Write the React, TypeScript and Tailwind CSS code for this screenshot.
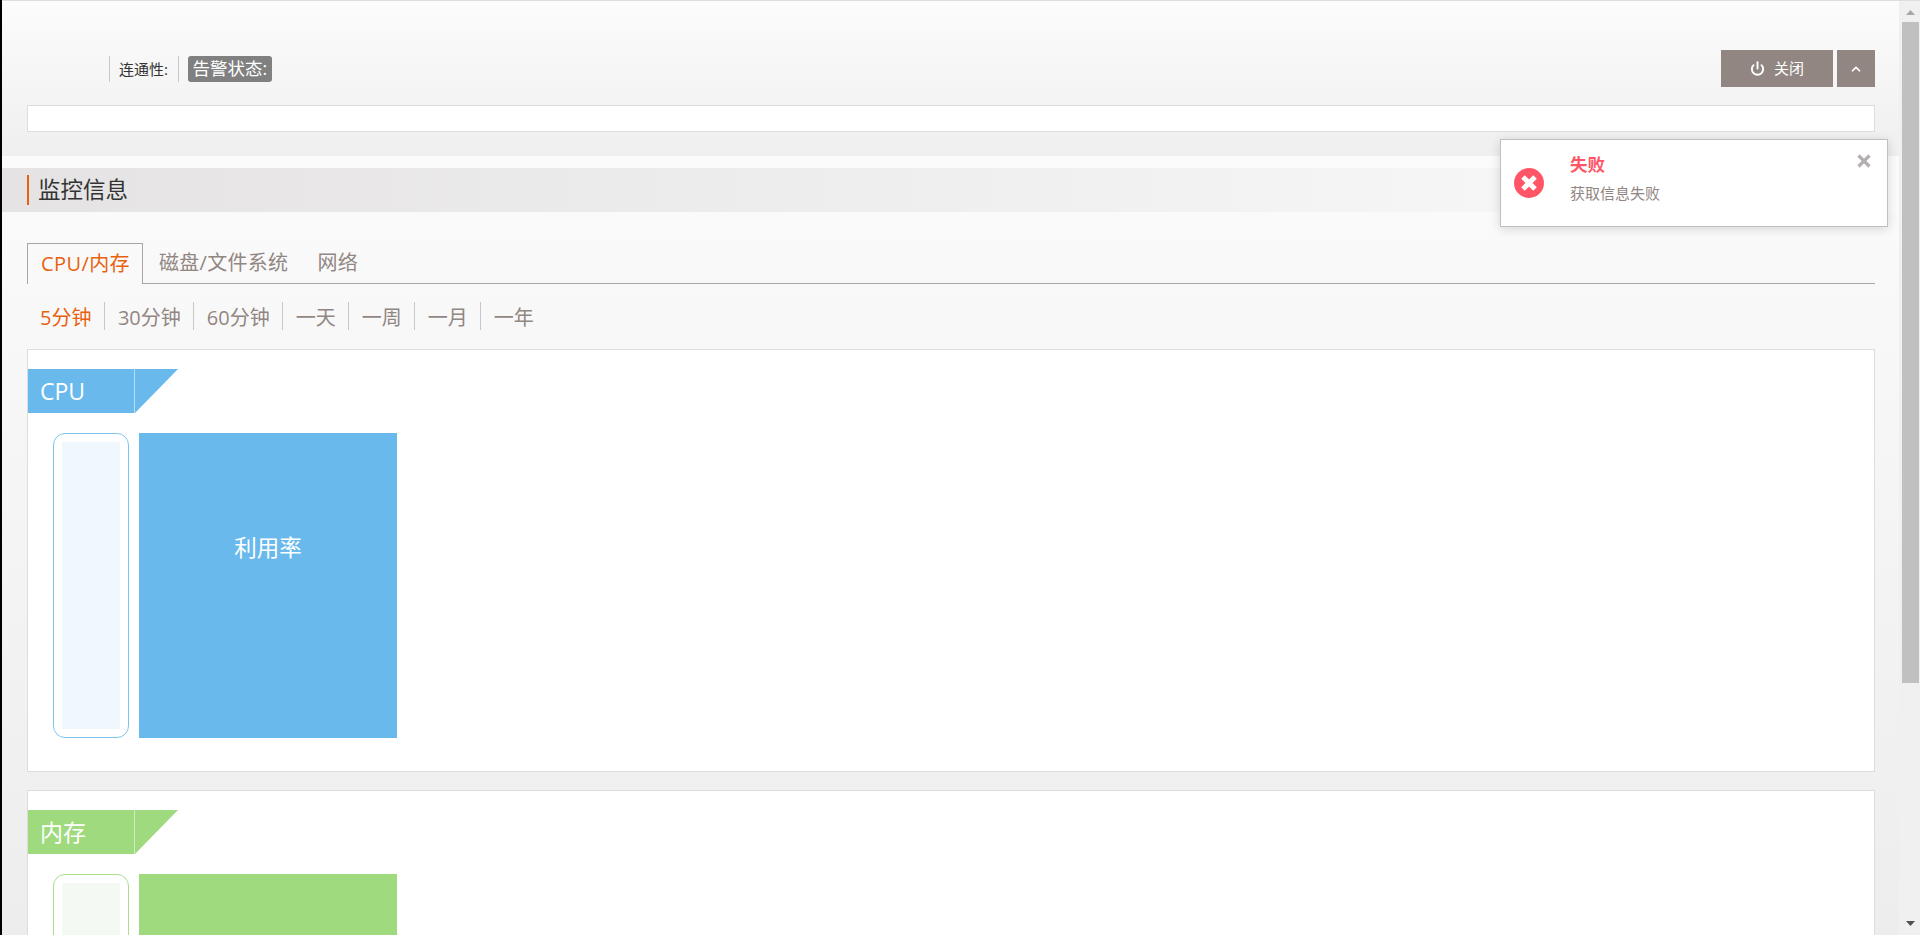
import React from 'react';
import { ChevronUp, Power } from 'lucide-react';

const ranges = ['5分钟', '30分钟', '60分钟', '一天', '一周', '一月', '一年'];
const tabs = ['磁盘/文件系统', '网络'];

interface ChartCardProps {
  title: string;
  label?: string;
  ribbonClass: string;
  ribbonLine: string;
  triangleFill: string;
  frameClass: string;
  innerClass: string;
}

const ChartCard: React.FC<ChartCardProps> = ({ title, label, ribbonClass, ribbonLine, triangleFill, frameClass, innerClass }) => (
  <div className="h-[423px] shrink-0 border border-[#dddddd] bg-white pt-[19px]">
    <div className="flex h-[44px]">
      <div className={`w-[107px] pl-[12px] border-r text-[23px] leading-[44px] text-white ${ribbonClass} ${ribbonLine}`}>{title}</div>
      <svg width="43" height="44" viewBox="0 0 43 44" className="block">
        <polygon points="0,0 43,0 0,44" fill={triangleFill} />
      </svg>
    </div>
    <div className="flex gap-[10px] mt-[20px] pl-[25px]">
      <div className={`w-[76px] h-[305px] p-[8px] border rounded-[12px] ${frameClass}`}>
        <div className={`h-full ${innerClass}`}></div>
      </div>
      <div className={`w-[258px] h-[305px] pt-[96px] text-center text-[22.5px] leading-[38px] text-white ${ribbonClass}`}>{label}</div>
    </div>
  </div>
);

export default function App() {
  return (
    <div className="relative flex h-[935px] overflow-hidden bg-[#f0f0f0] font-['Open_Sans','Noto_Sans_CJK_SC',sans-serif]">
      <div className="w-[2px] shrink-0 bg-black"></div>

      <div className="flex-1 min-w-0 flex flex-col">
        <div className="h-[156px] shrink-0 border-t border-[#dddddd] bg-gradient-to-b from-[#fcfcfc] to-[#efefef] pl-[25px] pr-[24px] pt-[49px]">
          <div className="flex items-center h-[37px] pl-[82px]">
            <div className="flex items-center h-[26px] w-[70px] pl-[9px] border-l border-r border-[#c8c8c8] text-[15px] leading-[26px] text-[#333333]">连通性:</div>
            <span className="ml-[9px] h-[26px] px-[4.5px] rounded-[3px] bg-[#808080] text-[17.5px] leading-[25px] text-white">告警状态:</span>
            <div className="ml-auto flex gap-[4px]">
              <button className="flex items-center justify-center gap-[9px] w-[112px] h-[37px] bg-[#918682] text-[15px] text-white">
                <Power size={15} strokeWidth={3} />
                关闭
              </button>
              <button className="flex items-center justify-center w-[38px] h-[37px] bg-[#918682] text-white">
                <ChevronUp size={14} strokeWidth={3} />
              </button>
            </div>
          </div>
          <div className="h-[27px] mt-[18px] border border-[#dddddd] bg-white"></div>
        </div>

        <div className="flex-1 min-h-0 bg-gradient-to-b from-[#fbfbfb] to-[#ededed] pt-[12px]">
          <div className="flex items-center h-[44px] pl-[25px] bg-gradient-to-r from-[#e5e3e4] to-[#fbfbfb]">
            <div className="h-[30px] pl-[9px] border-l-2 border-[#e8610f] text-[22.5px] leading-[30px] text-[#333333]">监控信息</div>
          </div>

          <div className="pl-[25px] pr-[24px]">
            <div className="flex h-[41px] mt-[31px] border-b border-[#aaa5a5]">
              <div className="h-[41px] pl-[13px] pr-[12px] border border-b-0 border-[#aaa5a5] bg-[#f9f9f9] text-[20px] tracking-[0.4px] leading-[40px] text-[#e8610f]">CPU/内存</div>
              {tabs.map((tab) => (
                <div key={tab} className="pl-[16px] pr-[13px] text-[20px] tracking-[0.3px] leading-[40px] text-[#918682]">{tab}</div>
              ))}
            </div>

            <div className="flex h-[28px] mt-[18px]">
              {ranges.map((range, i) => (
                <div
                  key={range}
                  className={i === 0
                    ? 'pl-[13px] pr-[13px] text-[20px] leading-[31px] text-[#e8610f]'
                    : 'px-[12.5px] border-l border-[#c8c8c8] text-[20px] leading-[31px] text-[#918682]'}
                >
                  {range}
                </div>
              ))}
            </div>

            <div className="flex flex-col gap-[18px] mt-[19px]">
              <ChartCard
                title="CPU"
                label="利用率"
                ribbonClass="bg-[#6ab9ec]"
                ribbonLine="border-[#b5dcf5]"
                triangleFill="#6ab9ec"
                frameClass="border-[#7cc6ee]"
                innerClass="bg-[#f0f7fd]"
              />
              <ChartCard
                title="内存"
                ribbonClass="bg-[#a0da7e]"
                ribbonLine="border-[#cfecbe]"
                triangleFill="#a0da7e"
                frameClass="border-[#a8de8c]"
                innerClass="bg-[#f4f9f3]"
              />
            </div>
          </div>
        </div>
      </div>

      <div className="w-[21px] shrink-0 flex flex-col pl-[3px] pr-[1px] border-t border-[#dddddd] bg-[#f0f0f0]">
        <div className="flex justify-center h-[21px] pt-[9px]">
          <svg width="9" height="5" viewBox="0 0 9 5" className="block">
            <polygon points="4.5,0 9,5 0,5" fill="#a8a8a8" />
          </svg>
        </div>
        <div className="h-[661px] bg-[#c0c0c0]"></div>
        <div className="flex justify-center mt-[238px]">
          <svg width="9" height="5" viewBox="0 0 9 5" className="block">
            <polygon points="0,0 9,0 4.5,5" fill="#505050" />
          </svg>
        </div>
      </div>

      <div className="absolute left-[1500px] top-[139px] w-[388px] h-[88px] flex border border-[#c4bebe] bg-white shadow-[0_2px_10px_rgba(0,0,0,0.15)]">
        <div className="w-[69px] shrink-0 pl-[12px] pt-[27px]">
          <svg width="32" height="32" viewBox="0 0 32 32" className="block">
            <circle cx="16" cy="16" r="15" fill="#ff5566" />
            <path d="M10 10 L22 22 M22 10 L10 22" stroke="#ffffff" strokeWidth="5" />
          </svg>
        </div>
        <div className="pt-[11px]">
          <div className="text-[17.5px] leading-[26px] font-bold text-[#ff5566]">失败</div>
          <div className="mt-[4px] text-[15px] leading-[24px] text-[#918682]">获取信息失败</div>
        </div>
        <button className="absolute right-[15px] top-[13px]">
          <svg width="16" height="16" viewBox="0 0 16 16" className="block">
            <path d="M2.5 2.5 L13.5 13.5 M13.5 2.5 L2.5 13.5" stroke="#b5b0b0" strokeWidth="3.2" />
          </svg>
        </button>
      </div>
    </div>
  );
}
